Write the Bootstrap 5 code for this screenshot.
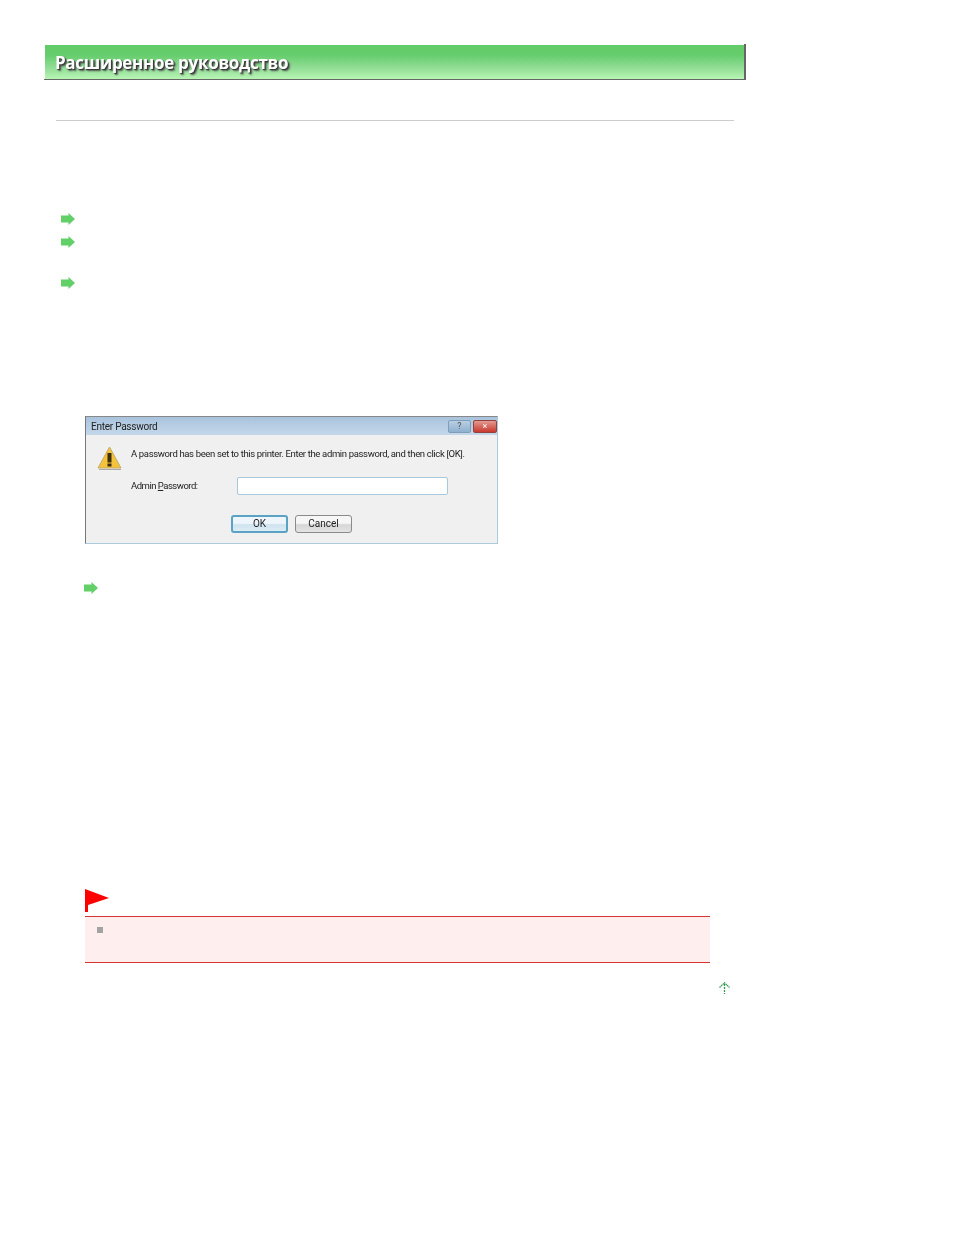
<!DOCTYPE html>
<html lang="ru">

<head>
    <meta charset="UTF-8">
    <meta name="viewport" content="width=device-width, initial-scale=1.0">
    <title>Расширенное руководство</title>
    <link href="https://cdn.jsdelivr.net/npm/bootstrap@5.3.5/dist/css/bootstrap.min.css" rel="stylesheet">
    <script src="https://cdn.jsdelivr.net/npm/bootstrap@5.3.5/dist/js/bootstrap.bundle.min.js"></script>
    <style>
        body { background: #fff; margin: 0; }
        .page-wrap { width: 702px; margin-left: 44px; padding-top: 44px; }
        .head-frame { height: 36px; padding: 1px 0 0 1px; border-right: 2px solid #666; border-bottom: 1px solid #666; }
        .head-bar {
            height: 34px; padding-left: 10px;
            background: linear-gradient(#62cc68 0, #66cd6c 30%, #8fdc94 65%, #b8f5b4 100%);
        }
        .head-text {
            font: bold 17px/35px "Open Sans", sans-serif; color: #fff; letter-spacing: -0.3px;
            text-shadow: 1px 1px 1px #333, 2px 2px 2px #555; filter: blur(0.3px);
        }
        .head-rule { height: 1px; background: #ccc; margin: 40px 12px 0 12px; }
        .arrow-link { height: 12px; margin-left: 17px; }
        .arrow-link svg { display: block; filter: blur(0.25px); }
        .link-a { margin-top: 92px; }
        .link-b { margin-top: 11px; }
        .link-c { margin-top: 29px; }

        .dlg {
            width: 413px; height: 128px; margin: 127px 0 0 41px; position: relative;
            background: #f0f0f0; border: 1px solid #a9cbdc; border-left-color: #777; border-top-color: #888;
            font: 10px/12px Roboto, sans-serif; color: #222; filter: blur(0.4px); white-space: nowrap;
        }
        .dlg-title { height: 18px; padding: 4px 0 0 5px; background: linear-gradient(#a9c3dd, #c5d8ea); letter-spacing: -0.25px; }
        .dlg-ctrls { top: 3px; right: 0; gap: 2px; }
        .dlg-help { width: 23px; height: 13px; background: linear-gradient(#b9cfe3, #8fb0cf); border: 1px solid #7f9db8; border-radius: 2px; color: #555; text-align: center; font-size: 9px; line-height: 11px; }
        .dlg-close { width: 24px; height: 13px; background: linear-gradient(#e39a90, #c8392e); border: 1px solid #95403c; border-radius: 2px; color: #fff; text-align: center; font-size: 9px; line-height: 11px; }
        .dlg-body { padding: 11px 0 0 11px; }
        .dlg-msg { margin-left: 9px; padding-top: 2px; font-size: 9.5px; letter-spacing: -0.35px; }
        .dlg-row { margin: 6px 0 0 34px; }
        .dlg-label { width: 106px; font-size: 9.5px; letter-spacing: -0.5px; }
        .dlg-input { width: 211px; height: 18px; background: #fff; border: 1px solid #a8c8dc; border-radius: 2px; }
        .dlg-btns { margin: 20px 0 0 134px; gap: 7px; }
        .dlg-btn { width: 57px; height: 18px; border: 1px solid #8a8a8a; border-radius: 3px; background: linear-gradient(#f6f6f6 45%, #d6d6d6 55%, #e4e4e4); text-align: center; line-height: 16px; }
        .dlg-btn-main { border: 2px solid #5aa3c4; line-height: 14px; background: linear-gradient(#eef6fb 45%, #cfe4ef 55%, #dcecf5); }

        .link-d { margin: 38px 0 0 40px; }
        .flag { margin: 295px 0 0 41px; height: 23px; }
        .flag svg { display: block; filter: blur(0.3px); }
        .note-box { width: 625px; height: 47px; margin: 4px 0 0 41px; background: #ffeeee; border-top: 1px solid #d83333; border-bottom: 1px solid #d83333; padding: 10px 0 0 12px; }
        .note-bullet { width: 6px; height: 6px; background: #a3a3a3; }
        .top-link { margin: 19px 0 0 675px; }
        .top-link svg { display: block; }
    </style>
</head>

<body>
    <div class="page-wrap">
        <div class="head-frame">
            <div class="head-bar"><span class="head-text d-inline-block">Расширенное руководство</span></div>
        </div>
        <div class="head-rule"></div>

        <div class="arrow-link link-a"><svg width="14" height="12" viewBox="0 0 14 12"><path d="M0 2.5H7.5V0L14 6L7.5 12V9.5H0Z" fill="#62cf69"/></svg></div>
        <div class="arrow-link link-b"><svg width="14" height="12" viewBox="0 0 14 12"><path d="M0 2.5H7.5V0L14 6L7.5 12V9.5H0Z" fill="#62cf69"/></svg></div>
        <div class="arrow-link link-c"><svg width="14" height="12" viewBox="0 0 14 12"><path d="M0 2.5H7.5V0L14 6L7.5 12V9.5H0Z" fill="#62cf69"/></svg></div>

        <div class="dlg">
            <div class="dlg-title">Enter Password</div>
            <div class="dlg-ctrls d-flex position-absolute">
                <div class="dlg-help">?</div>
                <div class="dlg-close">×</div>
            </div>
            <div class="dlg-body">
                <div class="d-flex">
                    <svg width="25" height="25" viewBox="0 0 25 25"><path d="M12.5 1L24 22H1Z" fill="#f5c33a" stroke="#c2ab6e"/><path d="M2 23.5H24" stroke="#aaa"/><rect x="10.5" y="7" width="4" height="9.5" fill="#3a3010"/><rect x="10.5" y="17.5" width="4" height="3" fill="#3a3010"/></svg>
                    <div class="dlg-msg">A password has been set to this printer. Enter the admin password, and then click [OK].</div>
                </div>
                <div class="dlg-row d-flex align-items-center">
                    <div class="dlg-label">Admin <u>P</u>assword:</div>
                    <div class="dlg-input"></div>
                </div>
                <div class="dlg-btns d-flex">
                    <div class="dlg-btn dlg-btn-main">OK</div>
                    <div class="dlg-btn">Cancel</div>
                </div>
            </div>
        </div>

        <div class="arrow-link link-d"><svg width="14" height="12" viewBox="0 0 14 12"><path d="M0 2.5H7.5V0L14 6L7.5 12V9.5H0Z" fill="#62cf69"/></svg></div>

        <div class="flag"><svg width="24" height="23" viewBox="0 0 24 23"><path d="M0 0L24 9L3 16V23H0Z" fill="#f00"/></svg></div>
        <div class="note-box"><div class="note-bullet"></div></div>

        <div class="top-link"><svg width="11" height="12" viewBox="0 0 11 12"><path d="M.5 5.5L5.5 .8L10.5 5.5" fill="none" stroke="#3a9c58" stroke-width="1.3" stroke-dasharray="1.6 .5"/><path d="M5.5 2V12" stroke="#2f9a4f" stroke-width="1.3" stroke-dasharray="2 1"/></svg></div>
    </div>
</body>

</html>
